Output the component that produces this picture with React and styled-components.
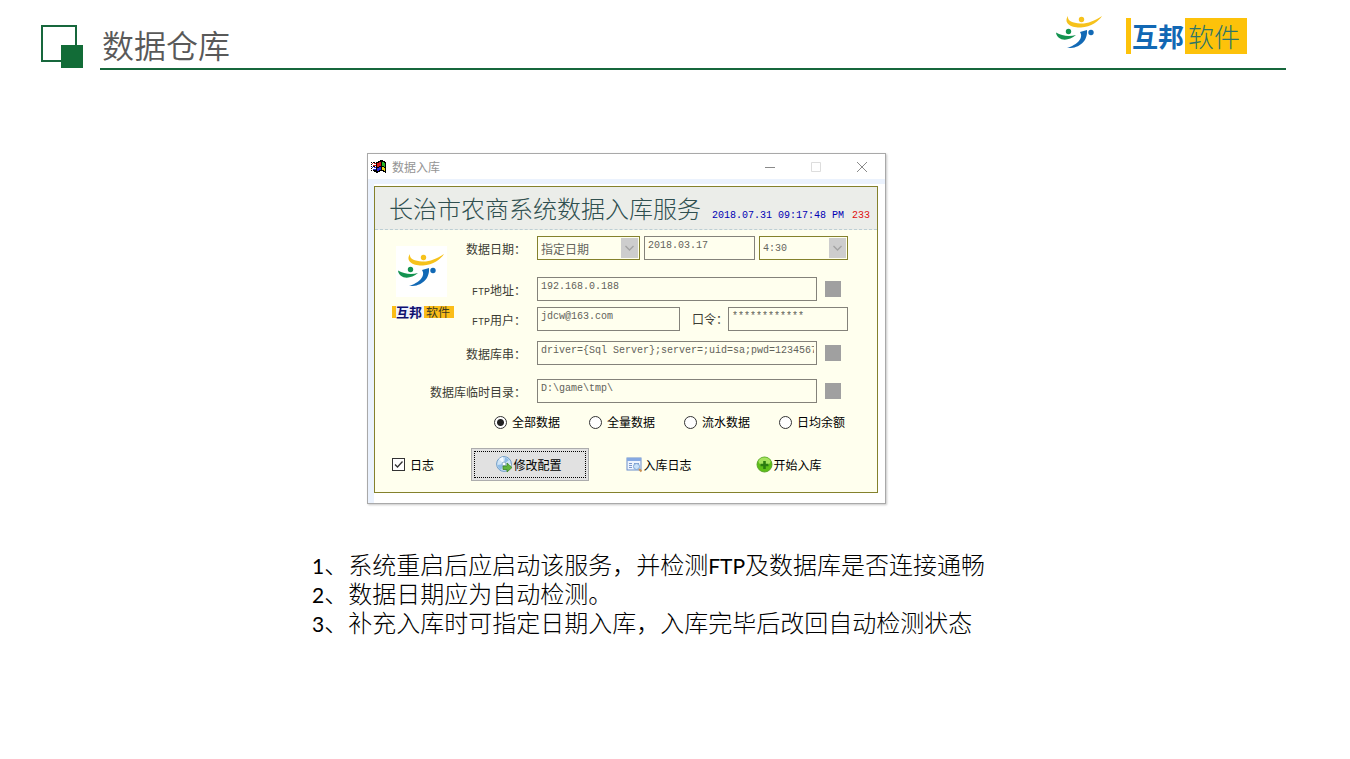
import React from "react";
import styled, { createGlobalStyle } from "styled-components";

const GlobalStyle = createGlobalStyle`
  * { box-sizing: border-box; }
  body {
    margin: 0;
    background: #ffffff;
    font-family: "Noto Sans CJK SC", sans-serif;
  }
  button, input, select { font: inherit; margin: 0; }
`;

const green = "#17673c";
const olive = "#84812c";
const cream = "#ffffee";
const mono = `"Liberation Mono", "Noto Sans CJK SC", monospace`;

const Page = styled.div`
  padding-bottom: 32px;
`;

const Header = styled.header`
  display: flex;
  padding: 0 64px 0 40px;
`;

const Mark = styled.svg`
  flex: none;
  width: 44px;
  height: 44px;
  margin-top: 25px;
`;

const HeaderBar = styled.div`
  flex: 1;
  display: flex;
  justify-content: space-between;
  margin-left: 16px;
  padding: 15px 39px 14px 2px;
  border-bottom: 2px solid ${green};
`;

const PageTitle = styled.h1`
  margin: 9px 0 0;
  font-size: 32px;
  line-height: 40px;
  height: 30px;
  font-weight: 350;
  color: #595959;
`;

const Brand = styled.div`
  display: flex;
  gap: 22px;
`;

const BrandFigure = styled.svg`
  width: 48px;
  height: 34px;
`;

const WordMark = styled.div`
  display: flex;
  align-items: center;
  height: 36px;
  margin-top: 3px;
  border-left: 5px solid #fdc20a;
  color: #1268b4;
  font-size: 26px;
  line-height: 36px;
`;

const WordStrong = styled.span`
  padding: 0 1px;
  font-weight: 700;
`;

const WordLight = styled.span`
  padding: 0 7px 0 3px;
  font-weight: 300;
  background: #fdc20a;
  color: #2d7468;
`;

const Content = styled.main`
  width: 100%;
  max-width: 726px;
  margin: 0 auto;
  padding-top: 83px;
`;

const Dialog = styled.section`
  max-width: 519px;
  margin-left: 55px;
  border: 1px solid #a9a9a9;
  box-shadow: 1px 1px 2px #c8c8c8;
  background: #ffffff;
`;

const TitleBar = styled.div`
  display: flex;
  align-items: center;
  height: 25px;
  padding: 0 17px 0 2px;
  font-size: 12px;
  color: #949494;
`;

const TitleText = styled.span`
  flex: 1;
  margin-left: 5px;
  line-height: 16px;
`;

const WindowControls = styled.div`
  display: flex;
  gap: 34px;
`;

const WindowButton = styled.button`
  display: flex;
  width: 12px;
  height: 12px;
  padding: 0;
  border: 0;
  background: none;
  color: ${(p) => (p.$faint ? "#dddddd" : "#8a8a8a")};
`;

const Frame = styled.div`
  padding: 2px 7px 10px 0;
  border-top: 5px solid #ebf2fd;
  border-left: 6px solid #ebf2fd;
`;

const Panel = styled.form`
  border: 1px solid ${olive};
  background: ${cream};
`;

const PanelHeader = styled.div`
  display: flex;
  align-items: flex-end;
  justify-content: space-between;
  height: 43px;
  padding: 0 7px 4px 14px;
  border-bottom: 1px dashed #bccfd4;
  background: #ebede9;
`;

const PanelTitle = styled.h2`
  margin: 0;
  font-size: 24px;
  line-height: 34px;
  font-weight: 300;
  color: #2f4f4f;
  white-space: nowrap;
`;

const Status = styled.div`
  display: flex;
  gap: 8px;
  font: 10px/18px ${mono};
  white-space: nowrap;
`;

const Clock = styled.time`
  color: #0000b4;
`;

const Counter = styled.span`
  color: #e01010;
`;

const Fields = styled.div`
  display: grid;
  grid-template-columns: 151px minmax(0, 1fr);
  grid-template-rows: 41px 30px 34px 38px 24px;
  column-gap: 11px;
  padding: 6px 29px 0 0;
`;

const PanelBrand = styled.div`
  grid-area: 1 / 1 / 4 / 2;
  justify-self: start;
  margin: 10px 0 0 17px;
  font-size: 12px;
`;

const LogoTile = styled.svg`
  display: block;
  width: 51px;
  height: 51px;
  margin-left: 4px;
  background: #ffffff;
`;

const MiniWordMark = styled.div`
  display: flex;
  align-items: center;
  width: 62px;
  height: 12px;
  margin-top: 9px;
  border-left: 4px solid #fbbd18;
  line-height: 12px;
  font-size: 13px;
  color: #10106e;
`;

const MiniStrong = styled.span`
  width: 28px;
  font-weight: 700;
  background: #eef1fb;
`;

const MiniLight = styled.span`
  flex: 1;
  padding-left: 2px;
  font-size: 12px;
  background: #fbbd18;
  color: #3c3a20;
`;

const Label = styled.label`
  grid-column: 1;
  grid-row: ${(p) => p.$row};
  justify-self: end;
  font-size: 12px;
  line-height: 26px;
  color: #3c3c34;
  white-space: nowrap;
`;

const Ascii = styled.span`
  font-family: ${mono};
  font-size: 10px;
`;

const Line = styled.div`
  grid-column: 2;
  grid-row: ${(p) => p.$row};
  display: flex;
  align-items: center;
  height: 24px;
  gap: ${(p) => p.$gap}px;
`;

const InlineLabel = styled.label`
  width: 36px;
  margin-left: 12px;
  font-size: 12px;
  line-height: 26px;
  color: #3c3c34;
  white-space: nowrap;
`;

const TextBox = styled.input`
  flex: ${(p) => (p.$width ? `0 0 ${p.$width}px` : 1)};
  min-width: 0;
  height: 24px;
  padding: 0 2px 5px 3px;
  border: 1px solid #84827a;
  border-radius: 0;
  background: ${cream};
  color: #62625a;
  font: 10px/16px ${mono};
`;

const SelectWrap = styled.div`
  position: relative;
  flex: 0 0 ${(p) => p.$width}px;
  height: 24px;
`;

const Select = styled.select`
  display: block;
  width: 100%;
  height: 24px;
  padding: 0 20px 0 3px;
  border: 1px solid ${olive};
  border-radius: 0;
  appearance: none;
  background: ${cream};
  color: #66665e;
  font: ${(p) => (p.$ascii ? `10px ${mono}` : `12px "Noto Sans CJK SC", sans-serif`)};
`;

const SelectArrow = styled.svg`
  position: absolute;
  top: 2px;
  right: 2px;
  width: 17px;
  height: 20px;
  background: #cdcdcd;
  pointer-events: none;
`;

const BrowseButton = styled.button`
  width: 16px;
  height: 16px;
  margin-right: 7px;
  padding: 0;
  border: 0;
  background: #a0a0a0;
`;

const Options = styled.div`
  display: grid;
  grid-template-columns: repeat(4, 95px);
  margin: 10px 0 0 119px;
`;

const Choice = styled.label`
  display: flex;
  align-items: center;
  gap: 5px;
  font-size: 12px;
  line-height: 18px;
  color: #000000;
  white-space: nowrap;
`;

const Radio = styled.input`
  appearance: none;
  flex: none;
  width: 13px;
  height: 13px;
  border: 1px solid #333333;
  border-radius: 50%;
  background: #ffffff;
  &:checked {
    background: radial-gradient(circle, #222222 3px, #ffffff 4px);
  }
`;

const Check = styled.input`
  appearance: none;
  flex: none;
  width: 13px;
  height: 13px;
  border: 1px solid #333333;
  background: #ffffff;
`;

const CheckWrap = styled.span`
  position: relative;
  display: flex;
`;

const Tick = styled.svg`
  position: absolute;
  inset: 0;
  width: 13px;
  height: 13px;
  pointer-events: none;
`;

const Actions = styled.div`
  display: grid;
  grid-template-columns: 67px repeat(3, 118px);
  column-gap: 12px;
  align-items: center;
  margin: 17px 0 0 17px;
  padding-bottom: 11px;
`;

const ActionButton = styled.button`
  display: flex;
  align-items: center;
  justify-content: center;
  height: 33px;
  padding: 0 2px 0 0;
  font-size: 12px;
  color: #000000;
  border: ${(p) => (p.$focused ? "1px solid #adadad" : "0")};
  background: ${(p) => (p.$focused ? "#e1e1e1" : "transparent")};
  outline: ${(p) => (p.$focused ? "1px dotted #000000" : "none")};
  outline-offset: -4px;
`;

const Icon = styled.svg`
  flex: none;
  width: 17px;
  height: 17px;
`;

const Notes = styled.div`
  margin-top: 45px;
  font-size: 24px;
  line-height: 29px;
  font-weight: 300;
  color: #000000;
`;

const Note = styled.p`
  margin: 0;
`;

const Latin = styled.span`
  font-family: Lato, sans-serif;
  font-size: 21px;
  line-height: 20px;
  font-weight: 400;
`;

const FigureShapes = () => (
  <>
    <path fill="#f6c21c" d="M12 1C7 8 15 13 25 12.500C35 12 43 6 46 1C38 6 31 9 24 8.500C17 8 11 6 12 1Z" />
    <circle cx="25.500" cy="4.500" r="2.700" fill="#f6c21c" />
    <path fill="#149350" d="M0 17.500C1 26 12 27 20 20C13 22 6 21 0 17.500Z" />
    <circle cx="12.500" cy="16.500" r="2.700" fill="#149350" />
    <path fill="#1269b5" d="M11 33C22 34 32 27 31 15L24 17C28 23 21 30 11 33Z" />
    <circle cx="35" cy="17.500" r="2.700" fill="#1269b5" />
  </>
);

const Dropdown = ({ id, label, value, width, ascii }) => (
  <SelectWrap $width={width}>
    <Select id={id} aria-label={label} defaultValue={value} $ascii={ascii}>
      <option>{value}</option>
    </Select>
    <SelectArrow viewBox="0 0 17 20" aria-hidden="true">
      <path d="M4.500 8L8.500 12L12.500 8" fill="none" stroke="#a2a2a2" strokeWidth="1.300" />
    </SelectArrow>
  </SelectWrap>
);

const WindowsIcon = () => (
  <Icon viewBox="0 0 17 17" shapeRendering="crispEdges" aria-hidden="true">
    <path fill="#000" d="M6 4H8V3H10V2H13V3H15V4H16V15H15V14H13V13H10V14H8V15H6V14H4V12H6ZM3 4H5V5H3ZM3 8H5V9H3ZM3 12H5V13H3ZM1 4H2V5H1ZM1 6H2V7H1ZM1 8H2V9H1ZM1 10H2V11H1ZM1 12H2V13H1Z" />
    <path fill="#d01818" d="M7 5H9V4H11V8H9V9H7ZM2 5H3V6H2ZM4 5H6V6H4ZM3 7H6V8H3Z" />
    <path fill="#28b428" d="M12 4H14V5H15V9H14V8H12Z" />
    <path fill="#2828d8" d="M7 10H9V9H11V12H9V13H7ZM2 9H3V10H2ZM4 9H6V10H4ZM3 11H6V12H3Z" />
    <path fill="#e8d818" d="M12 9H14V10H15V13H14V12H12Z" />
  </Icon>
);

const DiscIcon = () => (
  <Icon viewBox="0 0 17 17" aria-hidden="true">
    <circle cx="8" cy="8" r="7.400" fill="#cfe4f6" stroke="#6d9cc8" />
    <path d="M8 8L3 3A7 7 0 0 1 7 1ZM8 8L13 12A7 7 0 0 0 15 8Z" fill="#f4faff" />
    <path d="M8 8L1.500 9A7 7 0 0 0 5 14ZM8 8L9 1.500A7 7 0 0 1 13 4Z" fill="#8fbce6" />
    <circle cx="8" cy="8" r="2" fill="#fff" stroke="#88aacb" />
    <path d="M7 10H11V7L16 11.500L11 16V13.500H7Z" fill="#60b53e" stroke="#3d842a" strokeWidth="0.800" />
  </Icon>
);

const LogIcon = () => (
  <Icon viewBox="0 0 17 17" aria-hidden="true">
    <rect x="1" y="2" width="14" height="12" fill="#eef4fd" stroke="#6d8fcb" />
    <rect x="1" y="2" width="14" height="3" fill="#86a9e2" />
    <path d="M3 7.500H6M3 9.500H6M3 11.500H6M8 7.500H13" stroke="#7c98cc" />
    <circle cx="10.500" cy="10.500" r="3" fill="#c8e0f8" stroke="#7fa6d4" />
    <path d="M13 13L15.500 15.500" stroke="#c99052" strokeWidth="2" />
  </Icon>
);

const AddIcon = () => (
  <Icon viewBox="0 0 17 17" aria-hidden="true">
    <circle cx="8.500" cy="8.500" r="7.500" fill="#5ebf18" stroke="#5aa52c" />
    <ellipse cx="8.500" cy="5.500" rx="6" ry="4" fill="#a5e35e" />
    <path d="M8.500 5V13M4.500 9H12.500" stroke="#2a7c10" strokeWidth="2.600" />
  </Icon>
);

const choices = ["全部数据", "全量数据", "流水数据", "日均余额"];

export default function App() {
  return (
    <Page>
      <GlobalStyle />
      <Header>
        <Mark viewBox="0 0 44 44" aria-hidden="true">
          <rect x="2" y="1" width="34" height="35" fill="#fff" stroke={green} strokeWidth="2" />
          <rect x="21" y="20" width="22" height="23" fill="#126c37" />
        </Mark>
        <HeaderBar>
          <PageTitle>数据仓库</PageTitle>
          <Brand>
            <BrandFigure viewBox="0 0 48 34" aria-hidden="true">
              <FigureShapes />
            </BrandFigure>
            <WordMark>
              <WordStrong>互邦</WordStrong>
              <WordLight>软件</WordLight>
            </WordMark>
          </Brand>
        </HeaderBar>
      </Header>

      <Content>
        <Dialog aria-label="数据入库">
          <TitleBar>
            <WindowsIcon />
            <TitleText>数据入库</TitleText>
            <WindowControls>
              <WindowButton type="button" aria-label="最小化">
                <svg width="12" height="12"><path d="M1 6.500H11" stroke="currentColor" /></svg>
              </WindowButton>
              <WindowButton type="button" aria-label="最大化" $faint>
                <svg width="12" height="12"><path d="M1.500 1.500H10.500V10.500H1.500Z" fill="none" stroke="currentColor" /></svg>
              </WindowButton>
              <WindowButton type="button" aria-label="关闭">
                <svg width="12" height="12"><path d="M1 1L11 11M11 1L1 11" stroke="currentColor" /></svg>
              </WindowButton>
            </WindowControls>
          </TitleBar>
          <Frame>
            <Panel onSubmit={(e) => e.preventDefault()}>
              <PanelHeader>
                <PanelTitle>长治市农商系统数据入库服务</PanelTitle>
                <Status>
                  <Clock>2018.07.31 09:17:48 PM</Clock>
                  <Counter>233</Counter>
                </Status>
              </PanelHeader>

              <Fields>
                <PanelBrand>
                  <LogoTile viewBox="-2 -7 51 51" aria-hidden="true">
                    <FigureShapes />
                  </LogoTile>
                  <MiniWordMark>
                    <MiniStrong>互邦</MiniStrong>
                    <MiniLight>软件</MiniLight>
                  </MiniWordMark>
                </PanelBrand>

                <Label $row={1} htmlFor="date-mode">数据日期：</Label>
                <Line $row={1} $gap={4}>
                  <Dropdown id="date-mode" value="指定日期" width={103} />
                  <TextBox aria-label="日期" defaultValue="2018.03.17" />
                  <Dropdown label="时间" value="4:30" width={89} ascii />
                </Line>

                <Label $row={2} htmlFor="ftp-host"><Ascii>FTP</Ascii>地址：</Label>
                <Line $row={2} $gap={8}>
                  <TextBox id="ftp-host" defaultValue="192.168.0.188" />
                  <BrowseButton type="button" aria-label="检测FTP" />
                </Line>

                <Label $row={3} htmlFor="ftp-user"><Ascii>FTP</Ascii>用户：</Label>
                <Line $row={3} $gap={0}>
                  <TextBox id="ftp-user" defaultValue="jdcw@163.com" />
                  <InlineLabel htmlFor="ftp-pass">口令：</InlineLabel>
                  <TextBox id="ftp-pass" $width={120} defaultValue="************" />
                </Line>

                <Label $row={4} htmlFor="db">数据库串：</Label>
                <Line $row={4} $gap={8}>
                  <TextBox id="db" defaultValue="driver={Sql Server};server=;uid=sa;pwd=1234567" />
                  <BrowseButton type="button" aria-label="检测数据库" />
                </Line>

                <Label $row={5} htmlFor="tmp">数据库临时目录：</Label>
                <Line $row={5} $gap={8}>
                  <TextBox id="tmp" defaultValue="D:\game\tmp\" />
                  <BrowseButton type="button" aria-label="选择目录" />
                </Line>
              </Fields>

              <Options>
                {choices.map((text, i) => (
                  <Choice key={text}>
                    <Radio type="radio" name="scope" defaultChecked={i === 0} />
                    {text}
                  </Choice>
                ))}
              </Options>

              <Actions>
                <Choice>
                  <CheckWrap>
                    <Check type="checkbox" defaultChecked />
                    <Tick viewBox="0 0 13 13" aria-hidden="true">
                      <path d="M3 6.500L5.500 9L10.500 3.500" fill="none" stroke="#333" strokeWidth="1.300" />
                    </Tick>
                  </CheckWrap>
                  日志
                </Choice>
                <ActionButton type="button" $focused><DiscIcon />修改配置</ActionButton>
                <ActionButton type="button"><LogIcon />入库日志</ActionButton>
                <ActionButton type="button"><AddIcon />开始入库</ActionButton>
              </Actions>
            </Panel>
          </Frame>
        </Dialog>

        <Notes>
          <Note><Latin>1</Latin>、系统重启后应启动该服务，并检测<Latin>FTP</Latin>及数据库是否连接通畅</Note>
          <Note><Latin>2</Latin>、数据日期应为自动检测。</Note>
          <Note><Latin>3</Latin>、补充入库时可指定日期入库，入库完毕后改回自动检测状态</Note>
        </Notes>
      </Content>
    </Page>
  );
}
